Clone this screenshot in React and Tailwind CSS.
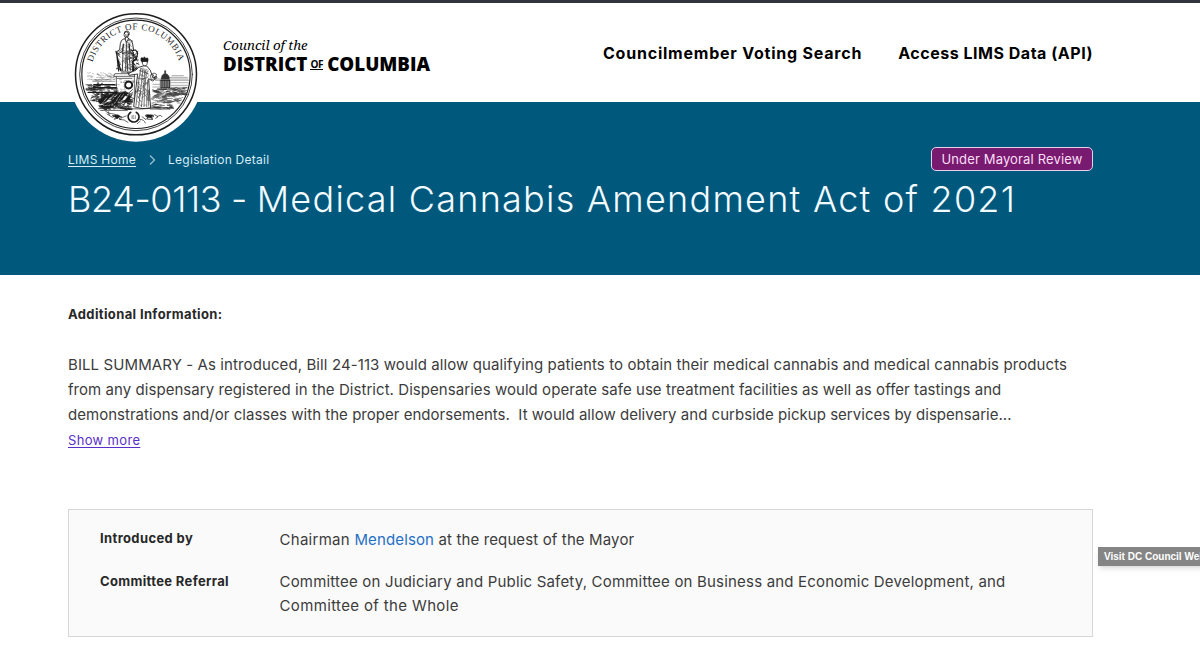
const summary = [
  {
    text: 'BILL SUMMARY - As introduced, Bill 24-113 would allow qualifying patients to obtain their medical cannabis and medical cannabis products',
    spacing: 'tracking-[0.1px]',
  },
  {
    text: 'from any dispensary registered in the District. Dispensaries would operate safe use treatment facilities as well as offer tastings and',
    spacing: 'tracking-[0.055px]',
  },
  {
    text: 'demonstrations and/or classes with the proper endorsements.\u00a0 It would allow delivery and curbside pickup services by dispensarie...',
    spacing: 'tracking-[0.027px]',
  },
]

// Engraving texture: short strokes scattered over a box, always the same for a seed
const scatter = (seed, count, x, y, w, h, len, slope) => {
  let s = seed
  const next = () => {
    s = (s * 16807) % 2147483647
    return s / 2147483647
  }
  let d = ''
  for (let i = 0; i < count; i++) {
    const px = x + next() * w
    const py = y + next() * h
    const l = len * (0.4 + next())
    d += `M${px.toFixed(1)} ${py.toFixed(1)}l${l.toFixed(1)} ${(l * slope * (next() * 2 - 0.7)).toFixed(1)}`
  }
  return d
}

const Seal = () => (
  <svg className="absolute top-0 left-[66px] h-[150px] w-[140px]" viewBox="0 0 420 450" fill="none" stroke="#1c1c1c" strokeLinecap="round" strokeLinejoin="round">
    <circle cx="210" cy="223" r="202" fill="#fff" stroke="none" />
    <circle cx="210" cy="223" r="181.5" strokeWidth="4.500" />
    <circle cx="210" cy="223" r="169" strokeWidth="2.500" />
    <circle cx="210" cy="223" r="162.500" strokeWidth="3.500" />
    <path id="motto" d="M80 187A135 135 0 0 1 340 187" stroke="none" />
    <text fontSize="27" fill="#2a2a2a" stroke="none" fontFamily="Liberation Serif, serif">
      <textPath href="#motto" textLength="346" lengthAdjust="spacing">DISTRICT OF COLUMBIA</textPath>
    </text>

    {/* sky, rays and horizon */}
    <path stroke="#777" strokeWidth="1.200" d={scatter(11, 70, 64, 218, 78, 26, 5, 0.5)} />
    <path stroke="#555" strokeWidth="1.500" d="M80 244h66M84 239h50M262 237h104M306 232h58M268 241h100M318 227h34" />

    {/* train and far bank on the left */}
    <path strokeWidth="3.500" d="M84 254h62M84 263h66M84 254v12M96 248v8M108 250v5M62 270h32M66 277h86" />
    <path strokeWidth="2" d={scatter(5, 65, 60, 252, 88, 25, 10, 0.2)} />
    <path strokeWidth="2.200" d={scatter(29, 55, 74, 278, 66, 28, 9, -0.6)} />

    {/* eagle and sheaf at the foot of the pedestal */}
    <path fill="#1c1c1c" d="M96 303l20-16 18-3 12-10 13 2-11 11-17 7-16 14-13 4zM136 305l22-25 20-6 15 8-15 4-9 13-12 7-4 11-12-2zM98 317l24-5 18-8-5 13 13-3-8 9-29 1zM174 304l13-17 9 2-9 17z" />
    <path stroke="#fff" strokeWidth="1.700" d="M122 294l-15 18M144 284l-20 20M163 284l-19 28M174 281l-18 25M188 280l-11 12M132 315l-20 2" />
    <path strokeWidth="2.300" d={scatter(71, 85, 90, 280, 104, 43, 10, -0.8)} />

    {/* pedestal with wreath */}
    <path strokeWidth="2" d="M148 221h54l5 8h-63zM151 230v48M205 230v70M153 235h45" />
    <path stroke="#555" strokeWidth="1.300" d={scatter(44, 30, 154, 238, 48, 42, 5, 0.2)} />
    <circle cx="188" cy="255" r="14" fill="#fff" stroke="none" />
    <circle cx="188" cy="255" r="10.500" strokeWidth="5.500" strokeDasharray="5 2" />
    <circle cx="188" cy="255" r="10" strokeWidth="3.500" />

    {/* Washington */}
    <ellipse cx="181" cy="104" rx="7" ry="8.500" strokeWidth="2.200" />
    <path strokeWidth="2.500" d="M175 101q-1-9 8-8t7 10M179 112l-2 6M185 112l3 5M178 105h2M184 105h2M180 109h4" />
    <path strokeWidth="2.600" d="M174 116q-10 3-11 15l-2 18-9 6 3 7 14-8 3-20M188 116q11 3 12 16l3 19-7 9-6-9-1-17M177 116l4 11 6-10M172 132l-2 29M190 132l2 29M181 128v29M171 159h20M171 160l-2 52M180 164l-1 48M189 160l4 51M183 163l2 49M166 216h32" />
    <path strokeWidth="3.600" d="M196 152l13-2 6 9-4 19-11 7 3 28M202 158l-2 53M152 161l6 52M150 154l14 58M205 180l-6 10" />
    <path stroke="#444" strokeWidth="1.500" d={scatter(91, 60, 165, 121, 32, 90, 7, 0.8)} />
    <path strokeWidth="2.200" d={scatter(18, 36, 192, 154, 20, 57, 6, 1.4)} />
    <path strokeWidth="1.800" d={scatter(83, 16, 151, 154, 11, 58, 5, 1.4)} />

    {/* Justice */}
    <path fill="#1c1c1c" strokeWidth="1" d="M225 183q-3-9 3-11l3 3 4-5 4 5 5-2q5 4 1 14l-5 3-10-1z" />
    <path fill="#fff" strokeWidth="2.200" d="M229 185q0 12 7 13 8 0 8-13z" />
    <path fill="#fff" strokeWidth="2.600" d="M230 198q-14 2-21 13l-22 9 2 6 26-4-3 24-9 74q24 10 51 4l-4-54-2-34 12 7 13-10-2-4-10 5-8-23-10-12z" />
    <path stroke="#333" strokeWidth="2" d="M225 204l-6 32-9 80M231 204l-4 40-9 76M237 207l-3 42-8 72M241 220l-5 42-2 58M245 240l-3 80M248 270v48M215 234q14 8 31-3M220 212l25 8M210 279l9-19M243 208l-8 9M217 294l9-20M250 300l-6-22" />
    <path stroke="#444" strokeWidth="1.400" d={scatter(35, 65, 212, 206, 32, 112, 6, 1.5)} />
    <path strokeWidth="2" d="M254 225l10-6 8 4-5 12-10 4zM260 222l7 13M190 220l-6-3" />

    {/* Capitol and hillside */}
    <path fill="#333" strokeWidth="1.500" d="M286 237q0-14 10-16v-9h3v9q11 2 11 16zM284 240h28v24h-28z" />
    <path stroke="#ddd" strokeWidth="1.500" d="M288 244v17M293 244v17M298 244v17M303 244v17M308 244v17" />
    <path stroke="#666" strokeWidth="1.600" d="M314 248h53M314 256h51M314 262h48M261 253h22M260 261h22" />
    <path stroke="#333" strokeWidth="2" d={scatter(63, 75, 260, 264, 92, 20, 11, 0.3)} />
    <path stroke="#444" strokeWidth="1.800" d={scatter(27, 85, 256, 280, 80, 29, 11, -0.3)} />
    <path stroke="#555" strokeWidth="1.500" d="M260 274q30-12 58-4t43-5M258 292q30-15 52-8t40-5M257 309q26-10 49-6t31-6" />

    {/* ground line */}
    <path strokeWidth="2.200" d="M98 326q40-5 84-1t75-1q36-4 65 0M104 331h80M253 327h58" />
    <path strokeWidth="2" d={scatter(54, 40, 100, 319, 90, 9, 9, 0.2)} />
    <path strokeWidth="1.800" d={scatter(58, 28, 256, 312, 60, 14, 8, 0.2)} />

    {/* wreath and ribbon */}
    <path strokeWidth="5" strokeDasharray="6 2" d="M194 337q-12 9-5 21 5 8 14 8M211 337q12 9 6 21-5 8-13 8" />
    <path stroke="#444" strokeWidth="1.600" d="M198 347v9M203 347h-2v8h3M208 347v9" />
    <path strokeWidth="2" d="M119 334q8 7 18 7t20 8 24-1M123 342l16 10 11-6M139 347l10 5-4 6 13-5 6 6 2-9M160 358q16-1 26 9M221 358q14 0 17 11M228 350l12 9 11-14 8 14M239 346h24v4h-22zM246 353h13v5h-13zM266 344l10 6-7 5M274 350q10-8 14 0M127 335l3 10M223 363l-9 8" />
    <path fill="#1c1c1c" strokeWidth="1.500" d="M141 347l14-3 9 5-11 7-5-5zM242 344l18 1-4 7-13-1z" />
  </svg>
)

const Row = ({ label, spacing, children }) => (
  <div className="flex">
    <b className={`w-[179.500px] shrink-0 text-[13px] leading-[22px] text-[#282828] ${spacing}`}>{label}</b>
    <div className="text-[15px] leading-[24.500px] whitespace-nowrap">{children}</div>
  </div>
)

const App = () => {
  return (
    <div className="relative h-[666px] w-[1200px] overflow-hidden bg-white font-['Inter',sans-serif] text-[#3c3c3c]">
      <header className="flex h-[102px] items-start border-t-3 border-[#33333f] pr-[107px] pl-[223px] text-black">
        <div className="mt-[34px]">
          <p className="font-['Noto_Serif','Liberation_Serif',serif] text-[13.300px] leading-[17px] italic">Council of the</p>
          <p className="flex items-baseline font-['Open_Sans',sans-serif] text-[18.700px] leading-[20px] font-extrabold">
            <span>DISTRICT</span>
            <span className="mr-[4px] ml-[3px] -translate-y-[3px] border-b border-black text-[10px] leading-[10px] font-bold tracking-[-0.300px]">OF</span>
            <span>COLUMBIA</span>
          </p>
        </div>
        <nav className="mt-[38px] ml-auto flex gap-9 text-[16px] leading-6 font-bold">
          <a href="#voting" className="tracking-[0.780px]">Councilmember Voting Search</a>
          <a href="#api" className="tracking-[0.520px]">Access LIMS Data (API)</a>
        </nav>
      </header>

      <section className="h-[173px] bg-[#00587c] pr-[107px] pl-[68px] text-[#f2fbff]">
        <div className="flex items-center pt-[45px]">
          <a href="#home" className="pt-px text-[12px] tracking-[0.280px] text-[#d5edf7] underline underline-offset-2">LIMS Home</a>
          <svg className="mx-3 mt-px h-[10px] w-2" viewBox="0 0 8 10" fill="none" stroke="#9cc4d6" strokeWidth="1.200">
            <path d="M2 0.500l4.500 4.500L2 9.500" />
          </svg>
          <span className="pt-px text-[12px] tracking-[0.250px] text-[#d5edf7]">Legislation Detail</span>
          <span className="ml-auto h-6 rounded-[5px] border border-[#e3d3ea] bg-[#781a70] px-[9.500px] text-[13px] leading-[22px] tracking-[0.150px] text-[#f8dff5]">
            Under Mayoral Review
          </span>
        </div>
        <h1 className="mt-px text-[36px] leading-[54px] font-light tracking-[1.240px] whitespace-nowrap">
          <span className="tracking-[-0.370px]">B24-0113 - </span>Medical Cannabis Amendment Act of 2021
        </h1>
      </section>

      <main className="pt-[29px] pr-[107px] pl-[68px]">
        <h2 className="text-[13px] leading-5 font-bold tracking-[0.370px] text-[#282828]">Additional Information:</h2>
        <div className="mt-[28px] text-[15px] leading-[25px] whitespace-nowrap">
          {summary.map((line) => (
            <p key={line.text} className={line.spacing}>{line.text}</p>
          ))}
          <a href="#more" className="block pt-px text-[13px] tracking-[0.330px] text-[#5a2fc9] underline underline-offset-2">Show more</a>
        </div>
        <div className="mt-[56px] flex h-32 flex-col gap-[17px] border border-[#d6d6d6] bg-[#fafafa] pt-[18px] pl-[31px]">
          <Row label="Introduced by" spacing="tracking-[0.380px] -mt-px">
            <p className="tracking-[0.130px]">
              <span className="tracking-[0.280px]">Chairman </span>
              <a href="#mendelson" className="text-[#1f6fc4]">Mendelson</a> at the request of the Mayor
            </p>
          </Row>
          <Row label="Committee Referral" spacing="tracking-[0.350px]">
            <p className="tracking-[0.190px]">Committee on Judiciary and Public Safety, Committee on Business and Economic Development, and</p>
            <p className="tracking-[0.360px]">Committee of the Whole</p>
          </Row>
        </div>
      </main>

      <Seal />

      <div className="absolute top-[547px] left-[1098px] h-[19px] w-[140px] bg-[#858585] pl-[6px] font-['Liberation_Sans',sans-serif] text-[10px] leading-[19px] font-bold whitespace-nowrap text-white shadow-md">
        Visit DC Council Website
      </div>
    </div>
  )
}

export default App
